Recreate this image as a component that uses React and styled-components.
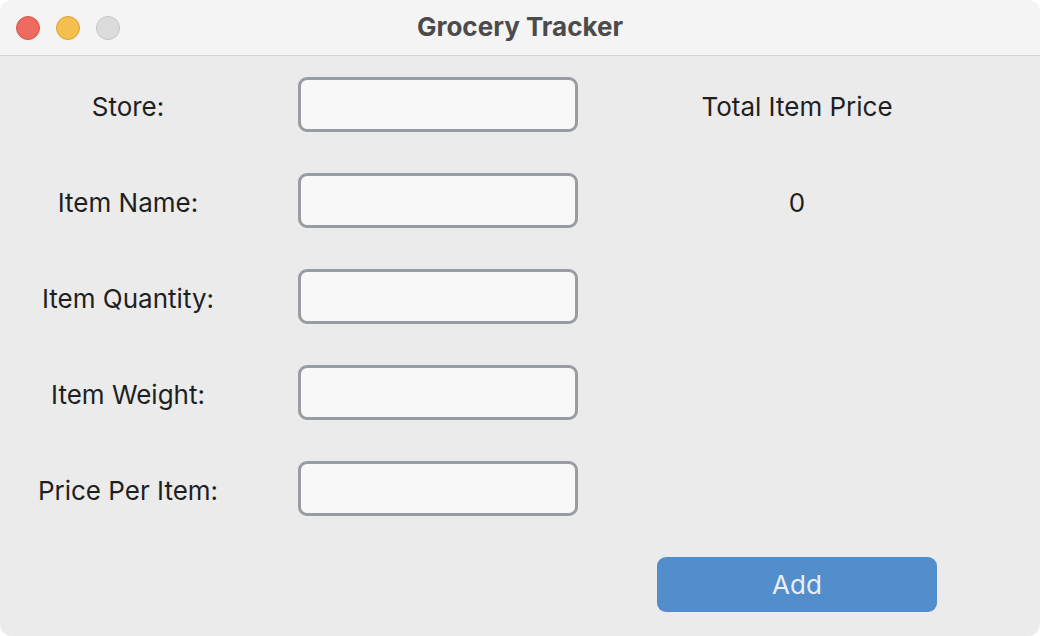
import React from "react";
import styled, { createGlobalStyle } from "styled-components";

const Global = createGlobalStyle`
  html, body { margin: 0; padding: 0; background: #ffffff; }
  body { font-family: Inter, "Liberation Sans", sans-serif; }
  * { box-sizing: border-box; }
`;

const Window = styled.div`
  width: 1040px;
  height: 636px;
  border-radius: 12px;
  overflow: hidden;
  background: #ebebeb;
  display: flex;
  flex-direction: column;
`;

const TitleBar = styled.div`
  height: 56px;
  flex: none;
  background: #f3f4f3;
  border-bottom: 1px solid #d4d4d4;
  display: grid;
  grid-template-columns: 200px 1fr 200px;
  align-items: center;
`;

const Lights = styled.div`
  display: flex;
  gap: 16px;
  padding-left: 16px;
`;

const Light = styled.span`
  width: 24px;
  height: 24px;
  border-radius: 50%;
  background: ${(p) => p.$bg};
  border: 1px solid ${(p) => p.$bd};
`;

const Title = styled.div`
  text-align: center;
  font-weight: 700;
  font-size: 26px;
  color: #4b4b4b;
  padding-bottom: 2px;
`;

const Form = styled.div`
  display: grid;
  grid-template-columns: 256px 280px 354px;
  column-gap: 42px;
  grid-auto-rows: 96px;
  align-items: center;
`;

const Label = styled.div`
  justify-self: center;
  font-size: 26px;
  color: #1f1f1f;
  padding-top: 4px;
`;

const Field = styled.input`
  width: 280px;
  height: 55px;
  border: 3px solid #999ca1;
  border-radius: 9px;
  background: #f8f8f8;
  outline: none;
  font-size: 22px;
  padding: 0 10px;
`;

const Side = styled.div`
  justify-self: center;
  font-size: 26px;
  color: #1f1f1f;
  padding-top: 4px;
`;

const Button = styled.button`
  grid-column: 3;
  justify-self: center;
  width: 280px;
  height: 55px;
  border: none;
  border-radius: 9px;
  background: #528ecb;
  color: #e8eff8;
  font-family: Inter, "Liberation Sans", sans-serif;
  font-size: 26px;
  padding-top: 2px;
`;

const rows = [
  ["Store:", "Total Item Price"],
  ["Item Name:", "0"],
  ["Item Quantity:", ""],
  ["Item Weight:", ""],
  ["Price Per Item:", ""],
];

export default function App() {
  return (
    <>
      <Global />
      <Window>
        <TitleBar>
          <Lights>
            <Light $bg="#ec6a5e" $bd="#d25a4f" />
            <Light $bg="#f4bf4f" $bd="#d9a33e" />
            <Light $bg="#dcdcdc" $bd="#c6c6c6" />
          </Lights>
          <Title>Grocery Tracker</Title>
          <div />
        </TitleBar>
        <Form>
          {rows.map(([label, side]) => (
            <React.Fragment key={label}>
              <Label>{label}</Label>
              <Field type="text" />
              <Side>{side}</Side>
            </React.Fragment>
          ))}
          <Button>Add</Button>
        </Form>
      </Window>
    </>
  );
}
